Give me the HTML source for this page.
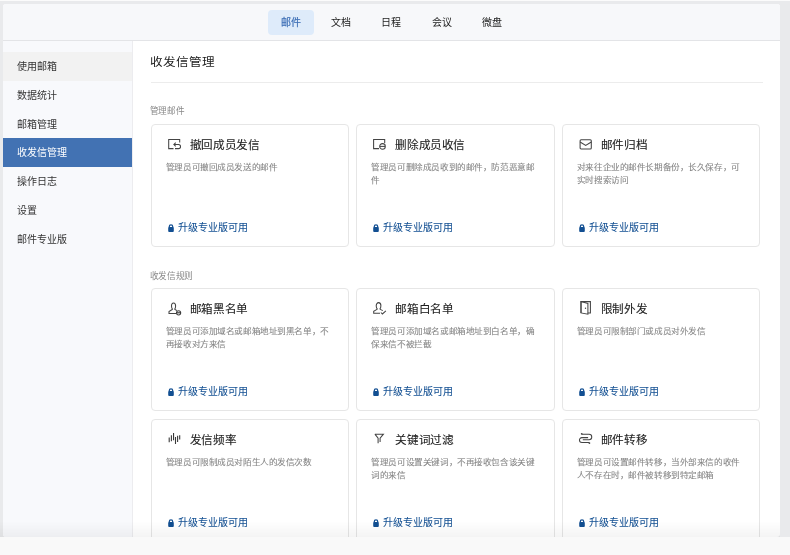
<!DOCTYPE html>
<html lang="zh-CN">
<head>
<meta charset="utf-8">
<style>
*{box-sizing:border-box;margin:0;padding:0}
html,body{width:790px;height:555px;overflow:hidden}
body{background:#e9eaec;font-family:"Liberation Sans",sans-serif;position:relative}
.abs{position:absolute}
#toprow{left:0;top:0;width:790px;height:1px;background:#fbfbfb}
#panel{left:3px;top:4px;width:777px;height:533px;background:#fff;border-radius:3px;overflow:hidden;will-change:transform}
#nav{left:0;top:0;width:777px;height:37px;background:#f7f8fa;border-bottom:1px solid #e3e4e7}
.nv{position:absolute;top:6px;height:25px;line-height:25px;font-size:10px;color:#222;text-align:center;width:46px;border-radius:4px}
.nv.on{background:#deebfa;color:#3d6fb6;-webkit-text-stroke:0.2px #3d6fb6}
#side{left:0;top:37px;width:130px;height:500px;background:#f8f9fc;border-right:1px solid #ececef}
.si{position:absolute;left:0;width:129px;height:28.8px;line-height:30.6px;padding-left:14.3px;font-size:10px;color:#333}
.si.hov{background:#f2f2f2}
.si.on{background:#4272b3;color:#fff}
#title{left:147.2px;top:48.3px;font-size:12.6px;letter-spacing:0px;color:#222;line-height:20px;white-space:nowrap}
#hr{left:147.5px;top:78px;width:612px;height:1px;background:#ececec}
.sec{position:absolute;left:146.9px;font-size:8.6px;letter-spacing:-0.44px;color:#888;line-height:12px;white-space:nowrap}
.card{position:absolute;width:198.3px;height:122.5px;border:1px solid #e6e6e6;border-radius:4px;background:#fff}
.card .ic{position:absolute;left:15px;top:12px}
.card .t{position:absolute;left:38px;top:12px;font-size:11.6px;-webkit-text-stroke:0.12px #1f1f1f;letter-spacing:-0.37px;line-height:16px;color:#1f1f1f;white-space:nowrap}
.card .d{position:absolute;left:14px;top:35.7px;width:168px;font-size:8.65px;letter-spacing:-0.42px;line-height:14.3px;color:#858585;-webkit-text-stroke:0.08px #858585}
.card .l{position:absolute;left:16px;top:96px;font-size:10px;line-height:14px;color:#124f92;white-space:nowrap;-webkit-text-stroke:0.06px #124f92}
.card .l svg{vertical-align:-1px;margin-right:4.2px}
#bot{left:0;top:537px;width:790px;height:18px;background:#f9f9f9;border-top:0}
#shade{left:0;top:521px;width:780px;height:16px;background:linear-gradient(rgba(0,0,0,0),rgba(0,0,0,0.045))}
#title{transform:scaleY(0.9);transform-origin:50% 55%}
.card .d{transform:scaleY(0.91);transform-origin:50% 0}

</style>
</head>
<body>
<div id="toprow" class="abs"></div>
<div id="panel" class="abs">
  <div id="nav" class="abs">
    <div class="nv on" style="left:264.5px">邮件</div>
    <div class="nv" style="left:314.9px">文档</div>
    <div class="nv" style="left:365.3px">日程</div>
    <div class="nv" style="left:415.7px">会议</div>
    <div class="nv" style="left:466.1px">微盘</div>
  </div>
  <div id="side" class="abs">
    <div class="si hov" style="top:11px">使用邮箱</div>
    <div class="si" style="top:39.8px">数据统计</div>
    <div class="si" style="top:68.6px">邮箱管理</div>
    <div class="si on" style="top:97.4px">收发信管理</div>
    <div class="si" style="top:126.2px">操作日志</div>
    <div class="si" style="top:155px">设置</div>
    <div class="si" style="top:183.8px">邮件专业版</div>
  </div>
  <div id="title" class="abs">收发信管理</div>
  <div id="hr" class="abs"></div>
  <div class="sec" style="top:101px">管理邮件</div>
  <div class="sec" style="top:266px">收发信规则</div>
  <div class="card" style="left:147.8px;top:120px">
    <svg class="ic" width="16" height="15" viewBox="0 0 16 15"><path d="M6.5 11.6H1.7V2.5H12.7V5.6" fill="none" stroke="#444" stroke-width="1.05"/><path d="M8 11.6H11.5A2.05 2.05 0 0 0 11.5 7.5H6.9" fill="none" stroke="#444" stroke-width="1.05"/><path d="M8.7 5.7L6.9 7.5L8.7 9.3" fill="none" stroke="#444" stroke-width="1.05"/></svg>
    <div class="t">撤回成员发信</div>
    <div class="d">管理员可撤回成员发送的邮件</div>
    <div class="l"><svg width="6" height="8" viewBox="0 0 6 8"><path d="M1.3 3.4V2.5a1.7 1.7 0 0 1 3.4 0v0.9" fill="none" stroke="#124f92" stroke-width="1.25"/><rect x="0.2" y="3.0" width="5.6" height="4.9" rx="0.9" fill="#124f92"/></svg><span>升级专业版可用</span></div>
  </div>
  <div class="card" style="left:353.3px;top:120px">
    <svg class="ic" width="16" height="15" viewBox="0 0 16 15"><path d="M7 11.6H1.6V2.5H12.7V6" fill="none" stroke="#444" stroke-width="1.05"/><circle cx="10.5" cy="9.4" r="2.8" fill="none" stroke="#444" stroke-width="1.05"/><path d="M8 9.4H13" fill="none" stroke="#444" stroke-width="1.05"/></svg>
    <div class="t">删除成员收信</div>
    <div class="d">管理员可删除成员收到的邮件，防范恶意邮件</div>
    <div class="l"><svg width="6" height="8" viewBox="0 0 6 8"><path d="M1.3 3.4V2.5a1.7 1.7 0 0 1 3.4 0v0.9" fill="none" stroke="#124f92" stroke-width="1.25"/><rect x="0.2" y="3.0" width="5.6" height="4.9" rx="0.9" fill="#124f92"/></svg><span>升级专业版可用</span></div>
  </div>
  <div class="card" style="left:558.8px;top:120px">
    <svg class="ic" width="16" height="15" viewBox="0 0 16 15"><rect x="2.1" y="2.7" width="11.2" height="9.3" rx="1" fill="none" stroke="#444" stroke-width="1.05"/><path d="M2.1 5L7.7 8.4L13.3 5" fill="none" stroke="#444" stroke-width="1.05"/></svg>
    <div class="t">邮件归档</div>
    <div class="d">对来往企业的邮件长期备份，长久保存，可实时搜索访问</div>
    <div class="l"><svg width="6" height="8" viewBox="0 0 6 8"><path d="M1.3 3.4V2.5a1.7 1.7 0 0 1 3.4 0v0.9" fill="none" stroke="#124f92" stroke-width="1.25"/><rect x="0.2" y="3.0" width="5.6" height="4.9" rx="0.9" fill="#124f92"/></svg><span>升级专业版可用</span></div>
  </div>
  <div class="card" style="left:147.8px;top:284.2px">
    <svg class="ic" width="16" height="15" viewBox="0 0 16 15"><g transform="translate(0 0.9)"><path d="M5.6 7.4C4.7 6.6 4.5 5.5 4.5 4A2.05 3 0 0 1 8.6 4C8.6 5.5 8.4 6.6 7.6 7.4" fill="none" stroke="#444" stroke-width="1.05"/><path d="M5.6 7.4L2 9.6V11.6H9.3" fill="none" stroke="#444" stroke-width="1.05"/><path d="M7.6 7.4L10 8.7" fill="none" stroke="#444" stroke-width="1.05"/><circle cx="11.6" cy="10.9" r="2.1" fill="#fff" fill="none" stroke="#444" stroke-width="1.05"/><path d="M9.6 10.9H13.6" fill="none" stroke="#222" stroke-width="1"/></g></svg>
    <div class="t">邮箱黑名单</div>
    <div class="d">管理员可添加域名或邮箱地址到黑名单，不再接收对方来信</div>
    <div class="l"><svg width="6" height="8" viewBox="0 0 6 8"><path d="M1.3 3.4V2.5a1.7 1.7 0 0 1 3.4 0v0.9" fill="none" stroke="#124f92" stroke-width="1.25"/><rect x="0.2" y="3.0" width="5.6" height="4.9" rx="0.9" fill="#124f92"/></svg><span>升级专业版可用</span></div>
  </div>
  <div class="card" style="left:353.3px;top:284.2px">
    <svg class="ic" width="16" height="15" viewBox="0 0 16 15"><g transform="translate(0 0.6)"><path d="M5.4 7.5C4.5 6.7 4.2 5.6 4.2 4.1A2.35 3.1 0 0 1 8.9 4.1C8.9 5.6 8.6 6.7 7.8 7.5" fill="none" stroke="#444" stroke-width="1.05"/><path d="M5.4 7.5L1.7 9.6V11.7H8" fill="none" stroke="#444" stroke-width="1.05"/><path d="M7.8 7.5L10.8 9" fill="none" stroke="#444" stroke-width="1.05"/><path d="M8.9 10.9L10.4 12.4L13.9 9.3" fill="none" stroke="#444" stroke-width="1.05"/></g></svg>
    <div class="t">邮箱白名单</div>
    <div class="d">管理员可添加域名或邮箱地址到白名单，确保来信不被拦截</div>
    <div class="l"><svg width="6" height="8" viewBox="0 0 6 8"><path d="M1.3 3.4V2.5a1.7 1.7 0 0 1 3.4 0v0.9" fill="none" stroke="#124f92" stroke-width="1.25"/><rect x="0.2" y="3.0" width="5.6" height="4.9" rx="0.9" fill="#124f92"/></svg><span>升级专业版可用</span></div>
  </div>
  <div class="card" style="left:558.8px;top:284.2px">
    <svg class="ic" width="16" height="15" viewBox="0 0 16 15"><path d="M9.9 11.9H12.4V0.6H3V11.9" fill="none" stroke="#444" stroke-width="1.05"/><path d="M3 0.6L9.9 2.5V13.2L3 11.9Z" fill="none" stroke="#444" stroke-width="1.05"/><circle cx="7.5" cy="7.3" r="0.7" fill="#444"/></svg>
    <div class="t">限制外发</div>
    <div class="d">管理员可限制部门或成员对外发信</div>
    <div class="l"><svg width="6" height="8" viewBox="0 0 6 8"><path d="M1.3 3.4V2.5a1.7 1.7 0 0 1 3.4 0v0.9" fill="none" stroke="#124f92" stroke-width="1.25"/><rect x="0.2" y="3.0" width="5.6" height="4.9" rx="0.9" fill="#124f92"/></svg><span>升级专业版可用</span></div>
  </div>
  <div class="card" style="left:147.8px;top:415.2px">
    <svg class="ic" width="16" height="15" viewBox="0 0 16 15"><path d="M2.2 5.4V10.3M4.4 3.3V9.2M6.55 1.1V8.3M8.5 4.9V12.1M10.6 3.8V10.1M12.7 3.3V7.4" stroke="#3a3a3a" stroke-width="1.1"/></svg>
    <div class="t">发信频率</div>
    <div class="d">管理员可限制成员对陌生人的发信次数</div>
    <div class="l"><svg width="6" height="8" viewBox="0 0 6 8"><path d="M1.3 3.4V2.5a1.7 1.7 0 0 1 3.4 0v0.9" fill="none" stroke="#124f92" stroke-width="1.25"/><rect x="0.2" y="3.0" width="5.6" height="4.9" rx="0.9" fill="#124f92"/></svg><span>升级专业版可用</span></div>
  </div>
  <div class="card" style="left:353.3px;top:415.2px">
    <svg class="ic" width="16" height="15" viewBox="0 0 16 15"><path d="M2.9 2.2H11.4L8.1 6.2V10.1M2.9 2.2L6.1 6.2V11.2" fill="none" stroke="#444" stroke-width="1.05"/></svg>
    <div class="t">关键词过滤</div>
    <div class="d">管理员可设置关键词，不再接收包含该关键词的来信</div>
    <div class="l"><svg width="6" height="8" viewBox="0 0 6 8"><path d="M1.3 3.4V2.5a1.7 1.7 0 0 1 3.4 0v0.9" fill="none" stroke="#124f92" stroke-width="1.25"/><rect x="0.2" y="3.0" width="5.6" height="4.9" rx="0.9" fill="#124f92"/></svg><span>升级专业版可用</span></div>
  </div>
  <div class="card" style="left:558.8px;top:415.2px">
    <svg class="ic" width="16" height="15" viewBox="0 0 16 15"><path d="M3.9 2.3H11A2.75 2.75 0 0 1 11 7.8H4.8" fill="none" stroke="#444" stroke-width="1.05"/><path d="M10.1 5.6H3.9A2.45 2.45 0 0 0 3.9 10.5H11.3" fill="none" stroke="#444" stroke-width="1.05"/><circle cx="3.7" cy="1.8" r="0.9" fill="#444"/><circle cx="11.4" cy="11.1" r="0.9" fill="#444"/></svg>
    <div class="t">邮件转移</div>
    <div class="d">管理员可设置邮件转移，当外部来信的收件人不存在时，邮件被转移到特定邮箱</div>
    <div class="l"><svg width="6" height="8" viewBox="0 0 6 8"><path d="M1.3 3.4V2.5a1.7 1.7 0 0 1 3.4 0v0.9" fill="none" stroke="#124f92" stroke-width="1.25"/><rect x="0.2" y="3.0" width="5.6" height="4.9" rx="0.9" fill="#124f92"/></svg><span>升级专业版可用</span></div>
  </div>
</div>
<div id="shade" class="abs"></div>
<div id="bot" class="abs"></div>
</body>
</html>
